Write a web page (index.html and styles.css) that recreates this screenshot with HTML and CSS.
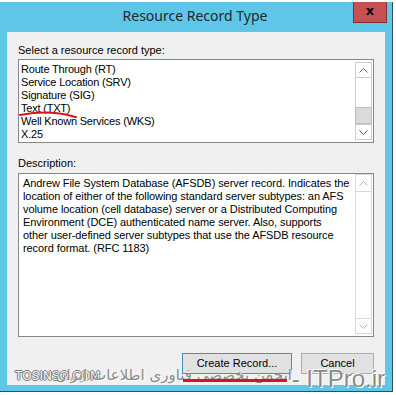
FILE: index.html
```html
<!DOCTYPE html>
<html lang="en">
<head>
    <meta charset="UTF-8">
    <title>Resource Record Type</title>
    <link rel="stylesheet" href="styles.css">
</head>
<body>
    <div class="window">
        <div class="titlebar">
            <span></span>
            <span class="title">Resource Record Type</span>
            <div class="close">x</div>
        </div>

        <div class="client">
            <div class="label">Select a resource record type:</div>
            <div class="listbox">
                <ul class="items">
                    <li>Route Through (RT)</li>
                    <li>Service Location (SRV)</li>
                    <li>Signature (SIG)</li>
                    <li class="marked">Text (TXT)
                        <svg class="scribble" width="60" height="8" viewBox="0 0 60 8">
                            <path d="M1 4 C 12 2, 24 1, 36 2 S 52 5, 57 6" fill="none" stroke="#d8141c" stroke-width="2" stroke-linecap="round"/>
                        </svg>
                    </li>
                    <li>Well Known Services (WKS)</li>
                    <li>X.25</li>
                </ul>
                <div class="scrollbar">
                    <div class="sb-btn">
                        <svg width="9" height="5" viewBox="0 0 9 5"><polyline points="0.5,4.5 4.5,0.5 8.5,4.5" fill="none" stroke="#606060"/></svg>
                    </div>
                    <div class="sb-track"></div>
                    <div class="sb-thumb"></div>
                    <div class="sb-btn">
                        <svg width="9" height="5" viewBox="0 0 9 5"><polyline points="0.5,0.5 4.5,4.5 8.5,0.5" fill="none" stroke="#606060"/></svg>
                    </div>
                </div>
            </div>

            <div class="label desc-label">Description:</div>
            <div class="descbox">
                <p class="desc">Andrew File System Database (AFSDB) server record. Indicates the<br>
                location of either of the following standard server subtypes: an AFS<br>
                volume location (cell database) server or a Distributed Computing<br>
                Environment (DCE) authenticated name server. Also, supports<br>
                other user-defined server subtypes that use the AFSDB resource<br>
                record format. (RFC 1183)</p>
                <div class="scrollbar off">
                    <div class="sb-btn">
                        <svg width="9" height="5" viewBox="0 0 9 5"><polyline points="0.5,4.5 4.5,0.5 8.5,4.5" fill="none" stroke="#b4b4b4"/></svg>
                    </div>
                    <div class="sb-track"></div>
                    <div class="sb-btn">
                        <svg width="9" height="5" viewBox="0 0 9 5"><polyline points="0.5,0.5 4.5,4.5 8.5,0.5" fill="none" stroke="#b4b4b4"/></svg>
                    </div>
                </div>
            </div>

            <div class="buttons">
                <div class="btn default">Create Record...</div>
                <div class="btn cancel">Cancel</div>
            </div>
        </div>

        <!-- watermark over the bottom of the dialog -->
        <div class="watermark">
            <span class="wm-site">TOSINSO.COM</span>
            <span class="wm-fa" dir="rtl">انجمن تخصصی فناوری اطلاعات ایران</span>
            <span class="wm-line"></span>
            <span class="wm-en">- ITPro.ir</span>
        </div>
    </div>
</body>
</html>
```

FILE: styles.css
```css
body{
    margin: 0;
    background: #fff;
    font-family: "Liberation Sans", Arial, sans-serif;
}
.window{
    position: relative;
    margin-top: 2px;
    width: 393px;
    height: 390px;
    box-sizing: border-box;
    background: #5fc6e7;
    border-right: 1px solid #2f4f5c;
    border-bottom: 1px solid #2f4f5c;
    display: flex;
    flex-direction: column;
}
.titlebar{
    height: 30px;
    display: grid;
    grid-template-columns: 1fr auto 1fr;
    align-items: start;
}
.title{
    font-family: "Noto Sans", "Open Sans", sans-serif;
    font-size: 14px;
    line-height: 28px;
    color: #1a2a30;
    margin-right: 2px;
}
.close{
    justify-self: end;
    margin-right: 5px;
    width: 34px;
    height: 21px;
    box-sizing: border-box;
    background: #c75050;
    border: 1px solid #7a3232;
    border-top: none;
    color: #000;
    font-family: "DejaVu Sans", sans-serif;
    font-weight: bold;
    font-size: 13px;
    line-height: 18px;
    text-align: center;
}
.client{
    flex: 1;
    margin: 0 7px 6px 7px;
    background: #f0f0f0;
    padding: 12px 11px 11px 11px;
    display: flex;
    flex-direction: column;
    font-size: 11px;
    line-height: 13px;
    color: #000;
}
.label{
    height: 13px;
}
.listbox{
    margin-top: 2px;
    height: 84px;
    box-sizing: border-box;
    border: 1px solid #828790;
    background: #fff;
    display: flex;
}
.items{
    flex: 1;
    list-style: none;
    margin: 0;
    padding: 3px 0 0 2px;
    letter-spacing: -0.2px;
}
.marked{
    position: relative;
}
.scribble{
    position: absolute;
    left: -2px;
    top: 9px;
}
.scrollbar{
    width: 17px;
    margin: 2px 1px 2px 0;
    display: flex;
    flex-direction: column;
}
.sb-btn{
    height: 16px;
    box-sizing: border-box;
    border: 1px solid #cdcdcd;
    display: flex;
    align-items: center;
    justify-content: center;
}
.sb-track{
    flex: 1;
    border-left: 1px solid #cdcdcd;
    border-right: 1px solid #cdcdcd;
}
.sb-thumb{
    height: 17px;
    box-sizing: border-box;
    border: 1px solid #bdbdbd;
    background: #dadada;
}
.off .sb-btn{
    height: 18px;
    border-color: #d8d8d8;
}
.off .sb-btn:last-child{
    height: 16px;
}
.off .sb-track{
    border-color: #d8d8d8;
}
.desc-label{
    margin-top: 14px;
}
.descbox{
    margin-top: 3px;
    height: 164px;
    box-sizing: border-box;
    border: 1px solid #828790;
    background: #fff;
    display: flex;
}
.descbox .scrollbar{
    margin-top: 0;
}
.desc{
    flex: 1;
    margin: 0;
    padding: 3px 0 0 4px;
    white-space: nowrap;
    letter-spacing: -0.08px;
}
.buttons{
    margin-top: 16px;
    display: flex;
    justify-content: flex-end;
    gap: 9px;
}
.btn{
    height: 21px;
    box-sizing: border-box;
    border: 1px solid #adadad;
    background: #e1e1e1;
    display: flex;
    align-items: center;
    justify-content: center;
}
.default{
    width: 110px;
    border-color: #4a8cc4;
}
.cancel{
    width: 73px;
}
.watermark{
    position: absolute;
    left: 0;
    top: 362px;
    width: 393px;
    height: 26px;
}
.wm-site{
    position: absolute;
    left: 15px;
    top: 5px;
    font-family: "DejaVu Sans", sans-serif;
    font-size: 12px;
    color: #f4f4f4;
    text-shadow: 1px 0 0 #7a7a7a, -1px 0 0 #7a7a7a, 0 1px 0 #7a7a7a, 0 -1px 0 #7a7a7a;
}
.wm-fa{
    position: absolute;
    left: 12px;
    top: 2px;
    width: 280px;
    font-family: "DejaVu Sans", sans-serif;
    font-size: 15px;
    color: #8c8c8c;
    text-shadow: 1px 1px 0 #fff;
}
.wm-line{
    position: absolute;
    left: 183px;
    top: 15px;
    width: 104px;
    height: 3px;
    background: #d8141c;
}
.wm-en{
    position: absolute;
    right: 8px;
    top: 1px;
    font-size: 24px;
    color: #8a8a8a;
    text-shadow: 1px 1px 0 #fff, -1px -1px 0 #fff;
}
```
